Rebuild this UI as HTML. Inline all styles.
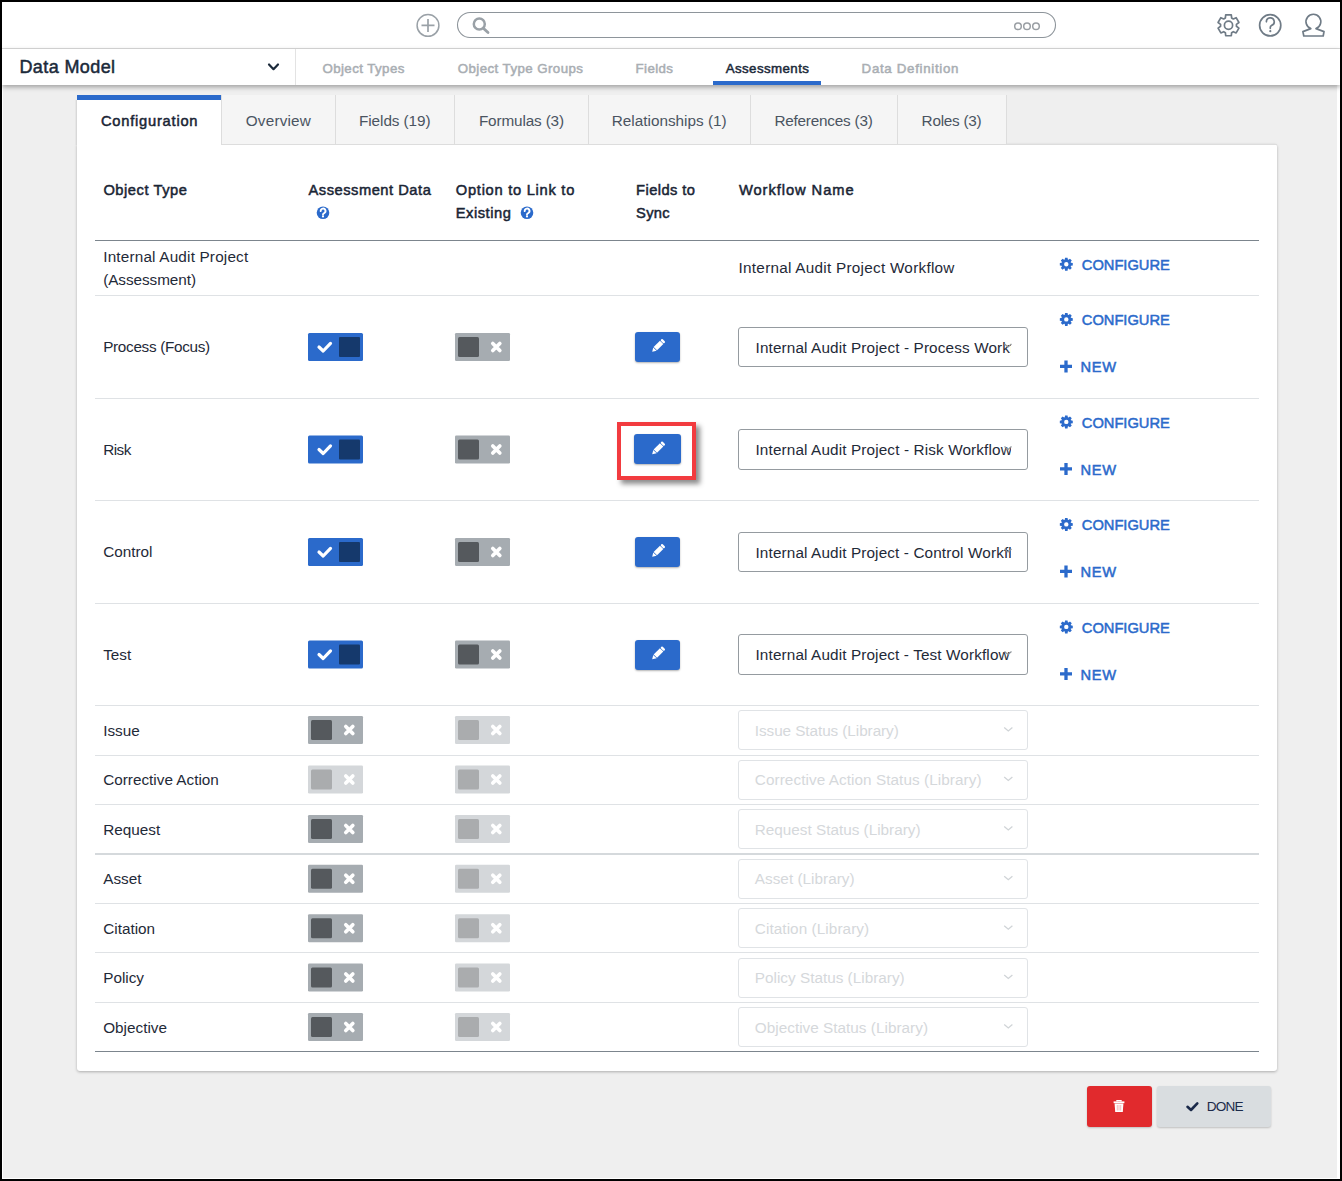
<!DOCTYPE html>
<html><head><meta charset="utf-8"><style>
html,body{margin:0;padding:0}
body{width:1342px;height:1181px;background:#000;position:relative;overflow:hidden;font-family:"Liberation Sans",sans-serif}
svg text{font-family:"Liberation Sans",sans-serif}
</style></head><body>
<div style="position:absolute;left:2px;top:2px;width:1338px;height:1177px;background:#fff"></div>
<div style="position:absolute;left:3px;top:85px;width:1334px;height:1093px;background:#efefef"></div>
<div style="position:absolute;left:2px;top:48px;width:1338px;height:1px;background:#dcdcdc"></div>
<div style="position:absolute;left:2px;top:49px;width:1338px;height:36px;background:#fff;box-shadow:0 2px 5px rgba(0,0,0,0.35);z-index:2"></div>
<div style="position:absolute;left:295px;top:49px;width:1px;height:36px;background:#e3e3e3;z-index:3"></div>
<div style="position:absolute;left:713px;top:81px;width:108px;height:4px;background:#2b6acb;z-index:3"></div>
<div style="position:absolute;left:77px;top:144px;width:1200px;height:927px;background:#fff;border-radius:0 3px 3px 3px;box-shadow:0 1px 3px rgba(0,0,0,0.28)"></div>
<div style="position:absolute;left:77px;top:95px;width:144px;height:50px;background:#fff;z-index:1"></div>
<div style="position:absolute;left:77px;top:95px;width:144px;height:5px;background:#2b6acb;z-index:1"></div>
<div style="position:absolute;left:76px;top:100px;width:1px;height:45px;background:#d8d8d8;z-index:1"></div>
<div style="position:absolute;left:75px;top:100px;width:1px;height:45px;background:#e6e6e6;z-index:1"></div>
<div style="position:absolute;left:221px;top:95px;width:113px;height:49px;background:#f5f5f5;border-left:1px solid #dddddd;border-bottom:1px solid #dddddd;box-sizing:content-box;z-index:1"></div>
<div style="position:absolute;left:335px;top:95px;width:118px;height:49px;background:#f5f5f5;border-left:1px solid #dddddd;border-bottom:1px solid #dddddd;box-sizing:content-box;z-index:1"></div>
<div style="position:absolute;left:454px;top:95px;width:133px;height:49px;background:#f5f5f5;border-left:1px solid #dddddd;border-bottom:1px solid #dddddd;box-sizing:content-box;z-index:1"></div>
<div style="position:absolute;left:588px;top:95px;width:161px;height:49px;background:#f5f5f5;border-left:1px solid #dddddd;border-bottom:1px solid #dddddd;box-sizing:content-box;z-index:1"></div>
<div style="position:absolute;left:750px;top:95px;width:146px;height:49px;background:#f5f5f5;border-left:1px solid #dddddd;border-bottom:1px solid #dddddd;box-sizing:content-box;z-index:1"></div>
<div style="position:absolute;left:897px;top:95px;width:108px;height:49px;background:#f5f5f5;border-left:1px solid #dddddd;border-bottom:1px solid #dddddd;box-sizing:content-box;z-index:1"></div>
<div style="position:absolute;left:1006px;top:95px;width:1px;height:50px;background:#dddddd;z-index:1"></div>
<div style="position:absolute;left:1007px;top:144px;width:270px;height:1px;background:#dddddd;z-index:1"></div>
<div style="position:absolute;left:95px;top:240px;width:1164px;height:1px;background:#7c858d"></div>
<div style="position:absolute;left:95px;top:295px;width:1164px;height:1px;background:#dfe2e5"></div>
<div style="position:absolute;left:95px;top:398px;width:1164px;height:1px;background:#dfe2e5"></div>
<div style="position:absolute;left:95px;top:500px;width:1164px;height:1px;background:#dfe2e5"></div>
<div style="position:absolute;left:95px;top:603px;width:1164px;height:1px;background:#dfe2e5"></div>
<div style="position:absolute;left:95px;top:705px;width:1164px;height:1px;background:#dfe2e5"></div>
<div style="position:absolute;left:95px;top:755px;width:1164px;height:1px;background:#dfe2e5"></div>
<div style="position:absolute;left:95px;top:804px;width:1164px;height:1px;background:#dfe2e5"></div>
<div style="position:absolute;left:95px;top:903px;width:1164px;height:1px;background:#dfe2e5"></div>
<div style="position:absolute;left:95px;top:952px;width:1164px;height:1px;background:#dfe2e5"></div>
<div style="position:absolute;left:95px;top:1002px;width:1164px;height:1px;background:#dfe2e5"></div>
<div style="position:absolute;left:95px;top:853px;width:1164px;height:2px;background:#d5d9dc"></div>
<div style="position:absolute;left:95px;top:1051px;width:1164px;height:1px;background:#7c858d"></div>
<div style="position:absolute;left:635px;top:332px;width:45px;height:30px;background:#2b6acb;border-radius:3px;box-shadow:0 1px 2px rgba(0,0,0,0.3);z-index:1"></div>
<div style="position:absolute;left:738px;top:327px;width:290px;height:40px;background:#fff;border:1px solid #959ba0;border-radius:3px;box-sizing:border-box;z-index:1"></div>
<div style="position:absolute;left:634px;top:434px;width:47px;height:30px;background:#2b6acb;border-radius:3px;box-shadow:0 1px 2px rgba(0,0,0,0.3);z-index:1"></div>
<div style="position:absolute;left:738px;top:429px;width:290px;height:41px;background:#fff;border:1px solid #959ba0;border-radius:3px;box-sizing:border-box;z-index:1"></div>
<div style="position:absolute;left:635px;top:537px;width:45px;height:30px;background:#2b6acb;border-radius:3px;box-shadow:0 1px 2px rgba(0,0,0,0.3);z-index:1"></div>
<div style="position:absolute;left:738px;top:532px;width:290px;height:40px;background:#fff;border:1px solid #959ba0;border-radius:3px;box-sizing:border-box;z-index:1"></div>
<div style="position:absolute;left:635px;top:639.5px;width:45px;height:30px;background:#2b6acb;border-radius:3px;box-shadow:0 1px 2px rgba(0,0,0,0.3);z-index:1"></div>
<div style="position:absolute;left:738px;top:634px;width:290px;height:41px;background:#fff;border:1px solid #959ba0;border-radius:3px;box-sizing:border-box;z-index:1"></div>
<div style="position:absolute;left:738px;top:710px;width:290px;height:40px;background:#fff;border:1px solid #e0e3e6;border-radius:3px;box-sizing:border-box;z-index:1"></div>
<div style="position:absolute;left:738px;top:759.5px;width:290px;height:40px;background:#fff;border:1px solid #e0e3e6;border-radius:3px;box-sizing:border-box;z-index:1"></div>
<div style="position:absolute;left:738px;top:809px;width:290px;height:40px;background:#fff;border:1px solid #e0e3e6;border-radius:3px;box-sizing:border-box;z-index:1"></div>
<div style="position:absolute;left:738px;top:858.7px;width:290px;height:40px;background:#fff;border:1px solid #e0e3e6;border-radius:3px;box-sizing:border-box;z-index:1"></div>
<div style="position:absolute;left:738px;top:908.2px;width:290px;height:40px;background:#fff;border:1px solid #e0e3e6;border-radius:3px;box-sizing:border-box;z-index:1"></div>
<div style="position:absolute;left:738px;top:957.5px;width:290px;height:40px;background:#fff;border:1px solid #e0e3e6;border-radius:3px;box-sizing:border-box;z-index:1"></div>
<div style="position:absolute;left:738px;top:1007px;width:290px;height:40px;background:#fff;border:1px solid #e0e3e6;border-radius:3px;box-sizing:border-box;z-index:1"></div>
<div style="position:absolute;left:617px;top:422px;width:79px;height:58px;border:4.5px solid #f23b3f;box-sizing:border-box;box-shadow:4px 4px 5px rgba(0,0,0,0.45);z-index:4"></div>
<div style="position:absolute;left:1087px;top:1086px;width:65px;height:41px;background:#e12a2d;border-radius:3px;box-shadow:0 1px 2px rgba(0,0,0,0.2)"></div>
<div style="position:absolute;left:1157px;top:1086px;width:114px;height:41px;background:#d9dde0;border-radius:3px;box-shadow:0 1px 2px rgba(0,0,0,0.2)"></div>
<svg style="position:absolute;left:0;top:0;z-index:5" width="1342" height="1181" viewBox="0 0 1342 1181">
<text x="101" y="126" font-size="14.7" stroke="#1a2535" stroke-width="0.5" fill="#1a2535" textLength="96.5" lengthAdjust="spacing">Configuration</text>
<text x="245.8" y="126" font-size="15.3" fill="#4a5461" textLength="65" lengthAdjust="spacing">Overview</text>
<text x="359" y="126" font-size="15.3" fill="#4a5461" textLength="71.6" lengthAdjust="spacing">Fields (19)</text>
<text x="478.9" y="126" font-size="15.3" fill="#4a5461" textLength="85.2" lengthAdjust="spacing">Formulas (3)</text>
<text x="611.8" y="126" font-size="15.3" fill="#4a5461" textLength="114.8" lengthAdjust="spacing">Relationships (1)</text>
<text x="774.4" y="126" font-size="15.3" fill="#4a5461" textLength="98.4" lengthAdjust="spacing">References (3)</text>
<text x="921.6" y="126" font-size="15.3" fill="#4a5461" textLength="60" lengthAdjust="spacing">Roles (3)</text>
<text x="19.4" y="72.8" font-size="18" stroke="#1b2a3a" stroke-width="0.5" fill="#1b2a3a" textLength="95.7" lengthAdjust="spacing">Data Model</text>
<text x="322.4" y="72.7" font-size="13.3" stroke="#a9aeb3" stroke-width="0.5" fill="#a9aeb3" textLength="82" lengthAdjust="spacing">Object Types</text>
<text x="457.7" y="72.7" font-size="13.3" stroke="#a9aeb3" stroke-width="0.5" fill="#a9aeb3" textLength="125.3" lengthAdjust="spacing">Object Type Groups</text>
<text x="635.6" y="72.7" font-size="13.3" stroke="#a9aeb3" stroke-width="0.5" fill="#a9aeb3" textLength="37.4" lengthAdjust="spacing">Fields</text>
<text x="725.7" y="72.7" font-size="13.3" stroke="#1b2a3a" stroke-width="0.5" fill="#1b2a3a" textLength="83.2" lengthAdjust="spacing">Assessments</text>
<text x="861.6" y="72.7" font-size="13.3" stroke="#a9aeb3" stroke-width="0.5" fill="#a9aeb3" textLength="96.9" lengthAdjust="spacing">Data Definition</text>
<path d="M269 64.5 L273.5 69.2 L278 64.5" fill="none" stroke="#1b2a3a" stroke-width="2.2" stroke-linecap="round" stroke-linejoin="round"/>
<circle cx="428" cy="25.4" r="10.9" fill="none" stroke="#9aa1a7" stroke-width="1.5"/>
<path d="M421.5 25.4 H434.5 M428 18.9 V31.9" stroke="#9aa1a7" stroke-width="1.7"/>
<rect x="457.5" y="12.5" width="598" height="25" rx="12.5" fill="#fff" stroke="#8e959b" stroke-width="1.1"/>
<circle cx="479.3" cy="24" r="5.5" fill="none" stroke="#9aa1a7" stroke-width="2.5"/>
<path d="M483.6 28.4 L488 32.6" stroke="#9aa1a7" stroke-width="2.8" stroke-linecap="round"/>
<circle cx="1018" cy="26.2" r="3.3" fill="none" stroke="#9a9fa4" stroke-width="1.5"/>
<circle cx="1027" cy="26.2" r="3.3" fill="none" stroke="#9a9fa4" stroke-width="1.5"/>
<circle cx="1036" cy="26.2" r="3.3" fill="none" stroke="#9a9fa4" stroke-width="1.5"/>
<polygon points="1225.37,17.94 1225.70,14.87 1231.30,14.87 1231.63,17.94 1233.31,18.91 1236.14,17.66 1238.93,22.50 1236.44,24.33 1236.44,26.27 1238.93,28.10 1236.14,32.94 1233.31,31.69 1231.63,32.66 1231.30,35.73 1225.70,35.73 1225.37,32.66 1223.69,31.69 1220.86,32.94 1218.07,28.10 1220.56,26.27 1220.56,24.33 1218.07,22.50 1220.86,17.66 1223.69,18.91" fill="none" stroke="#6f7b86" stroke-width="1.7" stroke-linejoin="round"/>
<circle cx="1228.5" cy="25.3" r="4.1" fill="none" stroke="#6f7b86" stroke-width="1.7"/>
<circle cx="1270.2" cy="25.3" r="10.6" fill="none" stroke="#6f7b86" stroke-width="1.7"/>
<path d="M1266.4 21.8 A3.9 3.9 0 1 1 1271.6 25.4 Q1270.3 26 1270.3 27.3 V28.3" fill="none" stroke="#6f7b86" stroke-width="1.7" stroke-linecap="round"/>
<circle cx="1270.3" cy="31.2" r="1.1" fill="#6f7b86"/>
<path d="M1310.8 28.6 L1302.9 31.6 L1303.8 36 L1323.2 36 L1324 31.6 L1316 28.6 A7.4 7.4 0 1 0 1310.8 28.6 Z" fill="none" stroke="#6f7b86" stroke-width="1.7" stroke-linejoin="round"/>
<text x="103.4" y="194.6" font-size="14.7" stroke="#1a2535" stroke-width="0.5" fill="#1a2535" textLength="83.5" lengthAdjust="spacing">Object Type</text>
<text x="308.5" y="194.6" font-size="14.7" stroke="#1a2535" stroke-width="0.5" fill="#1a2535" textLength="122.3" lengthAdjust="spacing">Assessment Data</text>
<text x="455.8" y="194.6" font-size="14.7" stroke="#1a2535" stroke-width="0.5" fill="#1a2535" textLength="118.5" lengthAdjust="spacing">Option to Link to</text>
<text x="455.8" y="217.9" font-size="14.7" stroke="#1a2535" stroke-width="0.5" fill="#1a2535" textLength="55" lengthAdjust="spacing">Existing</text>
<text x="636.1" y="194.6" font-size="14.7" stroke="#1a2535" stroke-width="0.5" fill="#1a2535" textLength="58.8" lengthAdjust="spacing">Fields to</text>
<text x="636.1" y="217.9" font-size="14.7" stroke="#1a2535" stroke-width="0.5" fill="#1a2535" textLength="33.5" lengthAdjust="spacing">Sync</text>
<text x="738.9" y="194.6" font-size="14.7" stroke="#1a2535" stroke-width="0.5" fill="#1a2535" textLength="114.7" lengthAdjust="spacing">Workflow Name</text>
<circle cx="323" cy="212.7" r="6.3" fill="#2b6acb"/>
<path d="M320.7 211.1 A2.4 2.4 0 1 1 324.2 213.1 Q323 213.6 323 214.5" fill="none" stroke="#fff" stroke-width="1.9" stroke-linecap="round"/>
<circle cx="323" cy="216.39999999999998" r="1.1" fill="#fff"/>
<circle cx="527" cy="212.7" r="6.3" fill="#2b6acb"/>
<path d="M524.7 211.1 A2.4 2.4 0 1 1 528.2 213.1 Q527 213.6 527 214.5" fill="none" stroke="#fff" stroke-width="1.9" stroke-linecap="round"/>
<circle cx="527" cy="216.39999999999998" r="1.1" fill="#fff"/>
<text x="103.2" y="262.2" font-size="15.3" fill="#1f2a38" textLength="145" lengthAdjust="spacing">Internal Audit Project</text>
<text x="103.2" y="285" font-size="15.3" fill="#1f2a38" textLength="92.8" lengthAdjust="spacing">(Assessment)</text>
<text x="738.6" y="272.9" font-size="15.3" fill="#1f2a38" textLength="215.8" lengthAdjust="spacing">Internal Audit Project Workflow</text>
<path fill-rule="evenodd" fill="#2b6acb" d="M1064.75,259.55 L1065.04,257.72 L1067.56,257.72 L1067.85,259.55 L1068.49,259.81 L1069.99,258.73 L1071.77,260.51 L1070.69,262.01 L1070.95,262.65 L1072.78,262.94 L1072.78,265.46 L1070.95,265.75 L1070.69,266.39 L1071.77,267.89 L1069.99,269.67 L1068.49,268.59 L1067.85,268.85 L1067.56,270.68 L1065.04,270.68 L1064.75,268.85 L1064.11,268.59 L1062.61,269.67 L1060.83,267.89 L1061.91,266.39 L1061.65,265.75 L1059.82,265.46 L1059.82,262.94 L1061.65,262.65 L1061.91,262.01 L1060.83,260.51 L1062.61,258.73 L1064.11,259.81 Z M1068.5 264.2 A2.2 2.2 0 1 0 1064.1 264.2 A2.2 2.2 0 1 0 1068.5 264.2 Z"/>
<text x="1081.8" y="269.8" font-size="14.7" stroke="#2b6acb" stroke-width="0.5" fill="#2b6acb" textLength="88" lengthAdjust="spacing">CONFIGURE</text>
<text x="103.2" y="352" font-size="15.3" fill="#1f2a38" textLength="107" lengthAdjust="spacing">Process (Focus)</text>
<rect x="308" y="333" width="55" height="28" rx="1.5" fill="#2b6acb"/>
<rect x="339" y="337" width="21" height="20" rx="1" fill="#15396c"/>
<path d="M319 347 L323.2 351 L330.5 343.4" fill="none" stroke="#fff" stroke-width="3.2" stroke-linecap="round" stroke-linejoin="round"/>
<rect x="455" y="333" width="55" height="28" rx="1.2" fill="#a6acb1"/>
<rect x="458" y="337" width="21" height="20" rx="1.5" fill="#55595d"/>
<path d="M492.8 343.5 L499.8 350.5 M499.8 343.5 L492.8 350.5" stroke="#fff" stroke-width="3.7" stroke-linecap="round"/>
<g transform="translate(657.6 346.4) rotate(-45)"><rect x="-3.2" y="-2.4" width="8.9" height="4.8" fill="#fff"/><path d="M-3.8 -2.4 L-7.6 0 L-3.8 2.4 Z" fill="#fff"/><rect x="6.3" y="-2.4" width="2.4" height="4.8" rx="1" fill="#fff"/></g>
<svg x="755" y="327" width="256" height="40" overflow="hidden"><text x="0.5" y="26" font-size="15.3" fill="#1f2a38" textLength="282.2" lengthAdjust="spacing">Internal Audit Project - Process Workflow</text></svg>
<path d="M1004.5 344 L1008 347 L1011.5 344" fill="none" stroke="#8e959b" stroke-width="1.2"/>
<path fill-rule="evenodd" fill="#2b6acb" d="M1064.75,314.75 L1065.04,312.92 L1067.56,312.92 L1067.85,314.75 L1068.49,315.01 L1069.99,313.93 L1071.77,315.71 L1070.69,317.21 L1070.95,317.85 L1072.78,318.14 L1072.78,320.66 L1070.95,320.95 L1070.69,321.59 L1071.77,323.09 L1069.99,324.87 L1068.49,323.79 L1067.85,324.05 L1067.56,325.88 L1065.04,325.88 L1064.75,324.05 L1064.11,323.79 L1062.61,324.87 L1060.83,323.09 L1061.91,321.59 L1061.65,320.95 L1059.82,320.66 L1059.82,318.14 L1061.65,317.85 L1061.91,317.21 L1060.83,315.71 L1062.61,313.93 L1064.11,315.01 Z M1068.5 319.4 A2.2 2.2 0 1 0 1064.1 319.4 A2.2 2.2 0 1 0 1068.5 319.4 Z"/>
<text x="1081.8" y="325" font-size="14.7" stroke="#2b6acb" stroke-width="0.5" fill="#2b6acb" textLength="88" lengthAdjust="spacing">CONFIGURE</text>
<path d="M1060 366.4 H1072 M1066 360.4 V372.4" stroke="#2b6acb" stroke-width="3.3"/>
<text x="1080.5" y="372" font-size="14.7" stroke="#2b6acb" stroke-width="0.5" fill="#2b6acb" textLength="35.7" lengthAdjust="spacing">NEW</text>
<text x="103.2" y="454.5" font-size="15.3" fill="#1f2a38" textLength="28.2" lengthAdjust="spacing">Risk</text>
<rect x="308" y="435.5" width="55" height="28" rx="1.5" fill="#2b6acb"/>
<rect x="339" y="439.5" width="21" height="20" rx="1" fill="#15396c"/>
<path d="M319 449.5 L323.2 453.5 L330.5 445.9" fill="none" stroke="#fff" stroke-width="3.2" stroke-linecap="round" stroke-linejoin="round"/>
<rect x="455" y="435.5" width="55" height="28" rx="1.2" fill="#a6acb1"/>
<rect x="458" y="439.5" width="21" height="20" rx="1.5" fill="#55595d"/>
<path d="M492.8 446.0 L499.8 453.0 M499.8 446.0 L492.8 453.0" stroke="#fff" stroke-width="3.7" stroke-linecap="round"/>
<g transform="translate(657.6 448.9) rotate(-45)"><rect x="-3.2" y="-2.4" width="8.9" height="4.8" fill="#fff"/><path d="M-3.8 -2.4 L-7.6 0 L-3.8 2.4 Z" fill="#fff"/><rect x="6.3" y="-2.4" width="2.4" height="4.8" rx="1" fill="#fff"/></g>
<svg x="755" y="429" width="256" height="41" overflow="hidden"><text x="0.5" y="26" font-size="15.3" fill="#1f2a38" textLength="256.2" lengthAdjust="spacing">Internal Audit Project - Risk Workflow</text></svg>
<path d="M1004.5 446.5 L1008 449.5 L1011.5 446.5" fill="none" stroke="#8e959b" stroke-width="1.2"/>
<path fill-rule="evenodd" fill="#2b6acb" d="M1064.75,417.25 L1065.04,415.42 L1067.56,415.42 L1067.85,417.25 L1068.49,417.51 L1069.99,416.43 L1071.77,418.21 L1070.69,419.71 L1070.95,420.35 L1072.78,420.64 L1072.78,423.16 L1070.95,423.45 L1070.69,424.09 L1071.77,425.59 L1069.99,427.37 L1068.49,426.29 L1067.85,426.55 L1067.56,428.38 L1065.04,428.38 L1064.75,426.55 L1064.11,426.29 L1062.61,427.37 L1060.83,425.59 L1061.91,424.09 L1061.65,423.45 L1059.82,423.16 L1059.82,420.64 L1061.65,420.35 L1061.91,419.71 L1060.83,418.21 L1062.61,416.43 L1064.11,417.51 Z M1068.5 421.9 A2.2 2.2 0 1 0 1064.1 421.9 A2.2 2.2 0 1 0 1068.5 421.9 Z"/>
<text x="1081.8" y="427.5" font-size="14.7" stroke="#2b6acb" stroke-width="0.5" fill="#2b6acb" textLength="88" lengthAdjust="spacing">CONFIGURE</text>
<path d="M1060 468.9 H1072 M1066 462.9 V474.9" stroke="#2b6acb" stroke-width="3.3"/>
<text x="1080.5" y="474.5" font-size="14.7" stroke="#2b6acb" stroke-width="0.5" fill="#2b6acb" textLength="35.7" lengthAdjust="spacing">NEW</text>
<text x="103.2" y="557" font-size="15.3" fill="#1f2a38">Control</text>
<rect x="308" y="538" width="55" height="28" rx="1.5" fill="#2b6acb"/>
<rect x="339" y="542" width="21" height="20" rx="1" fill="#15396c"/>
<path d="M319 552 L323.2 556 L330.5 548.4" fill="none" stroke="#fff" stroke-width="3.2" stroke-linecap="round" stroke-linejoin="round"/>
<rect x="455" y="538" width="55" height="28" rx="1.2" fill="#a6acb1"/>
<rect x="458" y="542" width="21" height="20" rx="1.5" fill="#55595d"/>
<path d="M492.8 548.5 L499.8 555.5 M499.8 548.5 L492.8 555.5" stroke="#fff" stroke-width="3.7" stroke-linecap="round"/>
<g transform="translate(657.6 551.4) rotate(-45)"><rect x="-3.2" y="-2.4" width="8.9" height="4.8" fill="#fff"/><path d="M-3.8 -2.4 L-7.6 0 L-3.8 2.4 Z" fill="#fff"/><rect x="6.3" y="-2.4" width="2.4" height="4.8" rx="1" fill="#fff"/></g>
<svg x="755" y="532" width="256" height="40" overflow="hidden"><text x="0.5" y="26" font-size="15.3" fill="#1f2a38" textLength="276" lengthAdjust="spacing">Internal Audit Project - Control Workflow</text></svg>
<path d="M1004.5 549 L1008 552 L1011.5 549" fill="none" stroke="#8e959b" stroke-width="1.2"/>
<path fill-rule="evenodd" fill="#2b6acb" d="M1064.75,519.75 L1065.04,517.92 L1067.56,517.92 L1067.85,519.75 L1068.49,520.01 L1069.99,518.93 L1071.77,520.71 L1070.69,522.21 L1070.95,522.85 L1072.78,523.14 L1072.78,525.66 L1070.95,525.95 L1070.69,526.59 L1071.77,528.09 L1069.99,529.87 L1068.49,528.79 L1067.85,529.05 L1067.56,530.88 L1065.04,530.88 L1064.75,529.05 L1064.11,528.79 L1062.61,529.87 L1060.83,528.09 L1061.91,526.59 L1061.65,525.95 L1059.82,525.66 L1059.82,523.14 L1061.65,522.85 L1061.91,522.21 L1060.83,520.71 L1062.61,518.93 L1064.11,520.01 Z M1068.5 524.4 A2.2 2.2 0 1 0 1064.1 524.4 A2.2 2.2 0 1 0 1068.5 524.4 Z"/>
<text x="1081.8" y="530" font-size="14.7" stroke="#2b6acb" stroke-width="0.5" fill="#2b6acb" textLength="88" lengthAdjust="spacing">CONFIGURE</text>
<path d="M1060 571.4 H1072 M1066 565.4 V577.4" stroke="#2b6acb" stroke-width="3.3"/>
<text x="1080.5" y="577" font-size="14.7" stroke="#2b6acb" stroke-width="0.5" fill="#2b6acb" textLength="35.7" lengthAdjust="spacing">NEW</text>
<text x="103.2" y="659.5" font-size="15.3" fill="#1f2a38">Test</text>
<rect x="308" y="640.5" width="55" height="28" rx="1.5" fill="#2b6acb"/>
<rect x="339" y="644.5" width="21" height="20" rx="1" fill="#15396c"/>
<path d="M319 654.5 L323.2 658.5 L330.5 650.9" fill="none" stroke="#fff" stroke-width="3.2" stroke-linecap="round" stroke-linejoin="round"/>
<rect x="455" y="640.5" width="55" height="28" rx="1.2" fill="#a6acb1"/>
<rect x="458" y="644.5" width="21" height="20" rx="1.5" fill="#55595d"/>
<path d="M492.8 651.0 L499.8 658.0 M499.8 651.0 L492.8 658.0" stroke="#fff" stroke-width="3.7" stroke-linecap="round"/>
<g transform="translate(657.6 653.9) rotate(-45)"><rect x="-3.2" y="-2.4" width="8.9" height="4.8" fill="#fff"/><path d="M-3.8 -2.4 L-7.6 0 L-3.8 2.4 Z" fill="#fff"/><rect x="6.3" y="-2.4" width="2.4" height="4.8" rx="1" fill="#fff"/></g>
<svg x="755" y="634" width="256" height="41" overflow="hidden"><text x="0.5" y="26" font-size="15.3" fill="#1f2a38" textLength="254.1" lengthAdjust="spacing">Internal Audit Project - Test Workflow</text></svg>
<path d="M1004.5 651.5 L1008 654.5 L1011.5 651.5" fill="none" stroke="#8e959b" stroke-width="1.2"/>
<path fill-rule="evenodd" fill="#2b6acb" d="M1064.75,622.25 L1065.04,620.42 L1067.56,620.42 L1067.85,622.25 L1068.49,622.51 L1069.99,621.43 L1071.77,623.21 L1070.69,624.71 L1070.95,625.35 L1072.78,625.64 L1072.78,628.16 L1070.95,628.45 L1070.69,629.09 L1071.77,630.59 L1069.99,632.37 L1068.49,631.29 L1067.85,631.55 L1067.56,633.38 L1065.04,633.38 L1064.75,631.55 L1064.11,631.29 L1062.61,632.37 L1060.83,630.59 L1061.91,629.09 L1061.65,628.45 L1059.82,628.16 L1059.82,625.64 L1061.65,625.35 L1061.91,624.71 L1060.83,623.21 L1062.61,621.43 L1064.11,622.51 Z M1068.5 626.9 A2.2 2.2 0 1 0 1064.1 626.9 A2.2 2.2 0 1 0 1068.5 626.9 Z"/>
<text x="1081.8" y="632.5" font-size="14.7" stroke="#2b6acb" stroke-width="0.5" fill="#2b6acb" textLength="88" lengthAdjust="spacing">CONFIGURE</text>
<path d="M1060 673.9 H1072 M1066 667.9 V679.9" stroke="#2b6acb" stroke-width="3.3"/>
<text x="1080.5" y="679.5" font-size="14.7" stroke="#2b6acb" stroke-width="0.5" fill="#2b6acb" textLength="35.7" lengthAdjust="spacing">NEW</text>
<text x="103.2" y="735.5" font-size="15.3" fill="#1f2a38">Issue</text>
<rect x="308" y="716" width="55" height="28" rx="1.2" fill="#a6acb1"/>
<rect x="311" y="720" width="21" height="20" rx="1.5" fill="#55595d"/>
<path d="M345.8 726.5 L352.8 733.5 M352.8 726.5 L345.8 733.5" stroke="#fff" stroke-width="3.7" stroke-linecap="round"/>
<rect x="455" y="716" width="55" height="28" rx="1.2" fill="#d4d7da"/>
<rect x="458" y="720" width="21" height="20" rx="1.5" fill="#aaacae"/>
<path d="M492.8 726.5 L499.8 733.5 M499.8 726.5 L492.8 733.5" stroke="#fff" stroke-width="3.7" stroke-linecap="round"/>
<text x="754.8" y="735.5" font-size="15.3" fill="#d5d8db" textLength="144" lengthAdjust="spacing">Issue Status (Library)</text>
<path d="M1004.2 727.5 L1008.3 731 L1012.4 727.5" fill="none" stroke="#d0d4d7" stroke-width="1.3"/>
<text x="103.2" y="785.0" font-size="15.3" fill="#1f2a38">Corrective Action</text>
<rect x="308" y="765.5" width="55" height="28" rx="1.2" fill="#d4d7da"/>
<rect x="311" y="769.5" width="21" height="20" rx="1.5" fill="#aaacae"/>
<path d="M345.8 776.0 L352.8 783.0 M352.8 776.0 L345.8 783.0" stroke="#fff" stroke-width="3.7" stroke-linecap="round"/>
<rect x="455" y="765.5" width="55" height="28" rx="1.2" fill="#d4d7da"/>
<rect x="458" y="769.5" width="21" height="20" rx="1.5" fill="#aaacae"/>
<path d="M492.8 776.0 L499.8 783.0 M499.8 776.0 L492.8 783.0" stroke="#fff" stroke-width="3.7" stroke-linecap="round"/>
<text x="754.8" y="785.0" font-size="15.3" fill="#d5d8db" textLength="226.8" lengthAdjust="spacing">Corrective Action Status (Library)</text>
<path d="M1004.2 777.0 L1008.3 780.5 L1012.4 777.0" fill="none" stroke="#d0d4d7" stroke-width="1.3"/>
<text x="103.2" y="834.5" font-size="15.3" fill="#1f2a38">Request</text>
<rect x="308" y="815" width="55" height="28" rx="1.2" fill="#a6acb1"/>
<rect x="311" y="819" width="21" height="20" rx="1.5" fill="#55595d"/>
<path d="M345.8 825.5 L352.8 832.5 M352.8 825.5 L345.8 832.5" stroke="#fff" stroke-width="3.7" stroke-linecap="round"/>
<rect x="455" y="815" width="55" height="28" rx="1.2" fill="#d4d7da"/>
<rect x="458" y="819" width="21" height="20" rx="1.5" fill="#aaacae"/>
<path d="M492.8 825.5 L499.8 832.5 M499.8 825.5 L492.8 832.5" stroke="#fff" stroke-width="3.7" stroke-linecap="round"/>
<text x="754.8" y="834.5" font-size="15.3" fill="#d5d8db" textLength="165.7" lengthAdjust="spacing">Request Status (Library)</text>
<path d="M1004.2 826.5 L1008.3 830 L1012.4 826.5" fill="none" stroke="#d0d4d7" stroke-width="1.3"/>
<text x="103.2" y="884.2" font-size="15.3" fill="#1f2a38">Asset</text>
<rect x="308" y="864.7" width="55" height="28" rx="1.2" fill="#a6acb1"/>
<rect x="311" y="868.7" width="21" height="20" rx="1.5" fill="#55595d"/>
<path d="M345.8 875.2 L352.8 882.2 M352.8 875.2 L345.8 882.2" stroke="#fff" stroke-width="3.7" stroke-linecap="round"/>
<rect x="455" y="864.7" width="55" height="28" rx="1.2" fill="#d4d7da"/>
<rect x="458" y="868.7" width="21" height="20" rx="1.5" fill="#aaacae"/>
<path d="M492.8 875.2 L499.8 882.2 M499.8 875.2 L492.8 882.2" stroke="#fff" stroke-width="3.7" stroke-linecap="round"/>
<text x="754.8" y="884.2" font-size="15.3" fill="#d5d8db" textLength="99.8" lengthAdjust="spacing">Asset (Library)</text>
<path d="M1004.2 876.2 L1008.3 879.7 L1012.4 876.2" fill="none" stroke="#d0d4d7" stroke-width="1.3"/>
<text x="103.2" y="933.7" font-size="15.3" fill="#1f2a38">Citation</text>
<rect x="308" y="914.2" width="55" height="28" rx="1.2" fill="#a6acb1"/>
<rect x="311" y="918.2" width="21" height="20" rx="1.5" fill="#55595d"/>
<path d="M345.8 924.7 L352.8 931.7 M352.8 924.7 L345.8 931.7" stroke="#fff" stroke-width="3.7" stroke-linecap="round"/>
<rect x="455" y="914.2" width="55" height="28" rx="1.2" fill="#d4d7da"/>
<rect x="458" y="918.2" width="21" height="20" rx="1.5" fill="#aaacae"/>
<path d="M492.8 924.7 L499.8 931.7 M499.8 924.7 L492.8 931.7" stroke="#fff" stroke-width="3.7" stroke-linecap="round"/>
<text x="754.8" y="933.7" font-size="15.3" fill="#d5d8db" textLength="114.4" lengthAdjust="spacing">Citation (Library)</text>
<path d="M1004.2 925.7 L1008.3 929.2 L1012.4 925.7" fill="none" stroke="#d0d4d7" stroke-width="1.3"/>
<text x="103.2" y="983.0" font-size="15.3" fill="#1f2a38">Policy</text>
<rect x="308" y="963.5" width="55" height="28" rx="1.2" fill="#a6acb1"/>
<rect x="311" y="967.5" width="21" height="20" rx="1.5" fill="#55595d"/>
<path d="M345.8 974.0 L352.8 981.0 M352.8 974.0 L345.8 981.0" stroke="#fff" stroke-width="3.7" stroke-linecap="round"/>
<rect x="455" y="963.5" width="55" height="28" rx="1.2" fill="#d4d7da"/>
<rect x="458" y="967.5" width="21" height="20" rx="1.5" fill="#aaacae"/>
<path d="M492.8 974.0 L499.8 981.0 M499.8 974.0 L492.8 981.0" stroke="#fff" stroke-width="3.7" stroke-linecap="round"/>
<text x="754.8" y="983.0" font-size="15.3" fill="#d5d8db" textLength="149.9" lengthAdjust="spacing">Policy Status (Library)</text>
<path d="M1004.2 975.0 L1008.3 978.5 L1012.4 975.0" fill="none" stroke="#d0d4d7" stroke-width="1.3"/>
<text x="103.2" y="1032.5" font-size="15.3" fill="#1f2a38">Objective</text>
<rect x="308" y="1013" width="55" height="28" rx="1.2" fill="#a6acb1"/>
<rect x="311" y="1017" width="21" height="20" rx="1.5" fill="#55595d"/>
<path d="M345.8 1023.5 L352.8 1030.5 M352.8 1023.5 L345.8 1030.5" stroke="#fff" stroke-width="3.7" stroke-linecap="round"/>
<rect x="455" y="1013" width="55" height="28" rx="1.2" fill="#d4d7da"/>
<rect x="458" y="1017" width="21" height="20" rx="1.5" fill="#aaacae"/>
<path d="M492.8 1023.5 L499.8 1030.5 M499.8 1023.5 L492.8 1030.5" stroke="#fff" stroke-width="3.7" stroke-linecap="round"/>
<text x="754.8" y="1032.5" font-size="15.3" fill="#d5d8db" textLength="173.2" lengthAdjust="spacing">Objective Status (Library)</text>
<path d="M1004.2 1024.5 L1008.3 1028 L1012.4 1024.5" fill="none" stroke="#d0d4d7" stroke-width="1.3"/>
<path d="M1113.6 1102.3 H1124.4" stroke="#fff" stroke-width="1.8"/><path d="M1117 1101.6 V1100.6 H1121 V1101.6" fill="none" stroke="#fff" stroke-width="1.4"/><path d="M1114.6 1103.6 H1123.4 L1122.8 1112 H1115.2 Z" fill="#fff"/><path d="M1117.3 1105 V1110.6 M1119 1105 V1110.6 M1120.7 1105 V1110.6" stroke="#f0a0a0" stroke-width="0.7"/>
<path d="M1187.5 1106.8 L1191 1110 L1197.3 1103.4" fill="none" stroke="#1b2a4a" stroke-width="2.6" stroke-linecap="round" stroke-linejoin="round"/>
<text x="1206.7" y="1110.8" font-size="13.6" fill="#1b2a4a" textLength="36.8" lengthAdjust="spacing">DONE</text>
</svg>
</body></html>
